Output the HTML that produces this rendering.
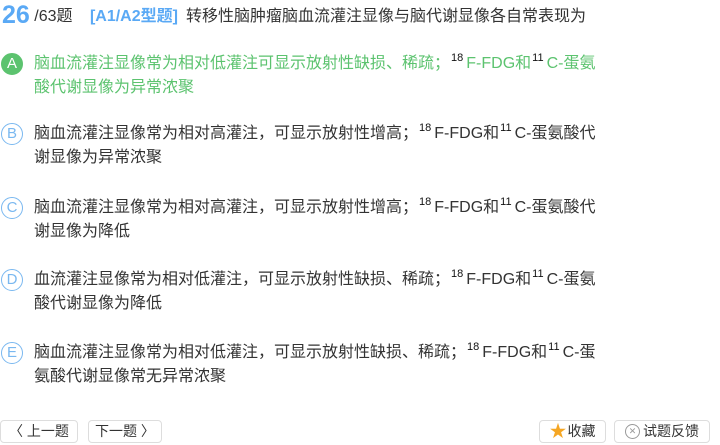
<!DOCTYPE html>
<html><head><meta charset="utf-8"><style>
body{margin:0;width:720px;height:445px;background:#fff;font-family:"Liberation Sans","Noto Sans CJK SC",sans-serif;color:#333;position:relative;overflow:hidden}
.h{position:absolute;left:2px;top:1px;font-size:16px;white-space:nowrap}
.num{color:#5aa9f5;font-size:25px;font-weight:bold;vertical-align:-2px}
.tag{color:#5aa9f5;font-weight:bold;margin:0 8px 0 13px}
.opt{position:absolute;left:0;width:700px}
.c{position:absolute;left:1px;width:20px;height:20px;border:1px solid #7ab8f0;border-radius:50%;color:#7ab8f0;font-size:15px;text-align:center;line-height:20px}
.t{margin-left:34px;font-size:16px;line-height:24px;white-space:nowrap}
sup{font-size:11px;vertical-align:7px;line-height:0;margin:0 3px 0 1px;color:#111}
.g .t{color:#5cc36f}
.g .c{background:#5cc36f;border-color:#5cc36f;color:#fff}
.btn{position:absolute;top:420px;height:23px;border:1px solid #ddd;border-radius:4px;font-size:14px;line-height:23px;color:#333;box-sizing:border-box;display:flex;align-items:center;justify-content:center}
</style></head><body>
<div class="h"><span class="num">26</span> /63题 <span class="tag">[A1/A2型题]</span>转移性脑肿瘤脑血流灌注显像与脑代谢显像各自常表现为</div>
<div class="opt g" style="top:52px"><div class="c" style="top:1px">A</div><div class="t">脑血流灌注显像常为相对低灌注可显示放射性缺损、稀疏；<sup>18</sup>F-FDG和<sup>11</sup>C-蛋氨<br>酸代谢显像为异常浓聚</div></div>
<div class="opt" style="top:122px"><div class="c" style="top:1px">B</div><div class="t">脑血流灌注显像常为相对高灌注，可显示放射性增高；<sup>18</sup>F-FDG和<sup>11</sup>C-蛋氨酸代<br>谢显像为异常浓聚</div></div>
<div class="opt" style="top:196px"><div class="c" style="top:1px">C</div><div class="t">脑血流灌注显像常为相对高灌注，可显示放射性增高；<sup>18</sup>F-FDG和<sup>11</sup>C-蛋氨酸代<br>谢显像为降低</div></div>
<div class="opt" style="top:268px"><div class="c" style="top:1px">D</div><div class="t">血流灌注显像常为相对低灌注，可显示放射性缺损、稀疏；<sup>18</sup>F-FDG和<sup>11</sup>C-蛋氨<br>酸代谢显像为降低</div></div>
<div class="opt" style="top:341px"><div class="c" style="top:1px">E</div><div class="t">脑血流灌注显像常为相对低灌注，可显示放射性缺损、稀疏；<sup>18</sup>F-FDG和<sup>11</sup>C-蛋<br>氨酸代谢显像常无异常浓聚</div></div>
<div class="btn" style="left:0;width:78px">〈 上一题</div>
<div class="btn" style="left:88px;width:74px">下一题 〉</div>
<div class="btn" style="left:539px;width:67px"><span style="color:#f5a623;font-size:17px;margin-right:1px">★</span>收藏</div>
<div class="btn" style="left:614px;width:96px"><span style="display:inline-block;width:13px;height:13px;border:1px solid #999;border-radius:50%;font-size:9px;line-height:13px;text-align:center;color:#999;margin-right:3px">✕</span>试题反馈</div>
</body></html>
